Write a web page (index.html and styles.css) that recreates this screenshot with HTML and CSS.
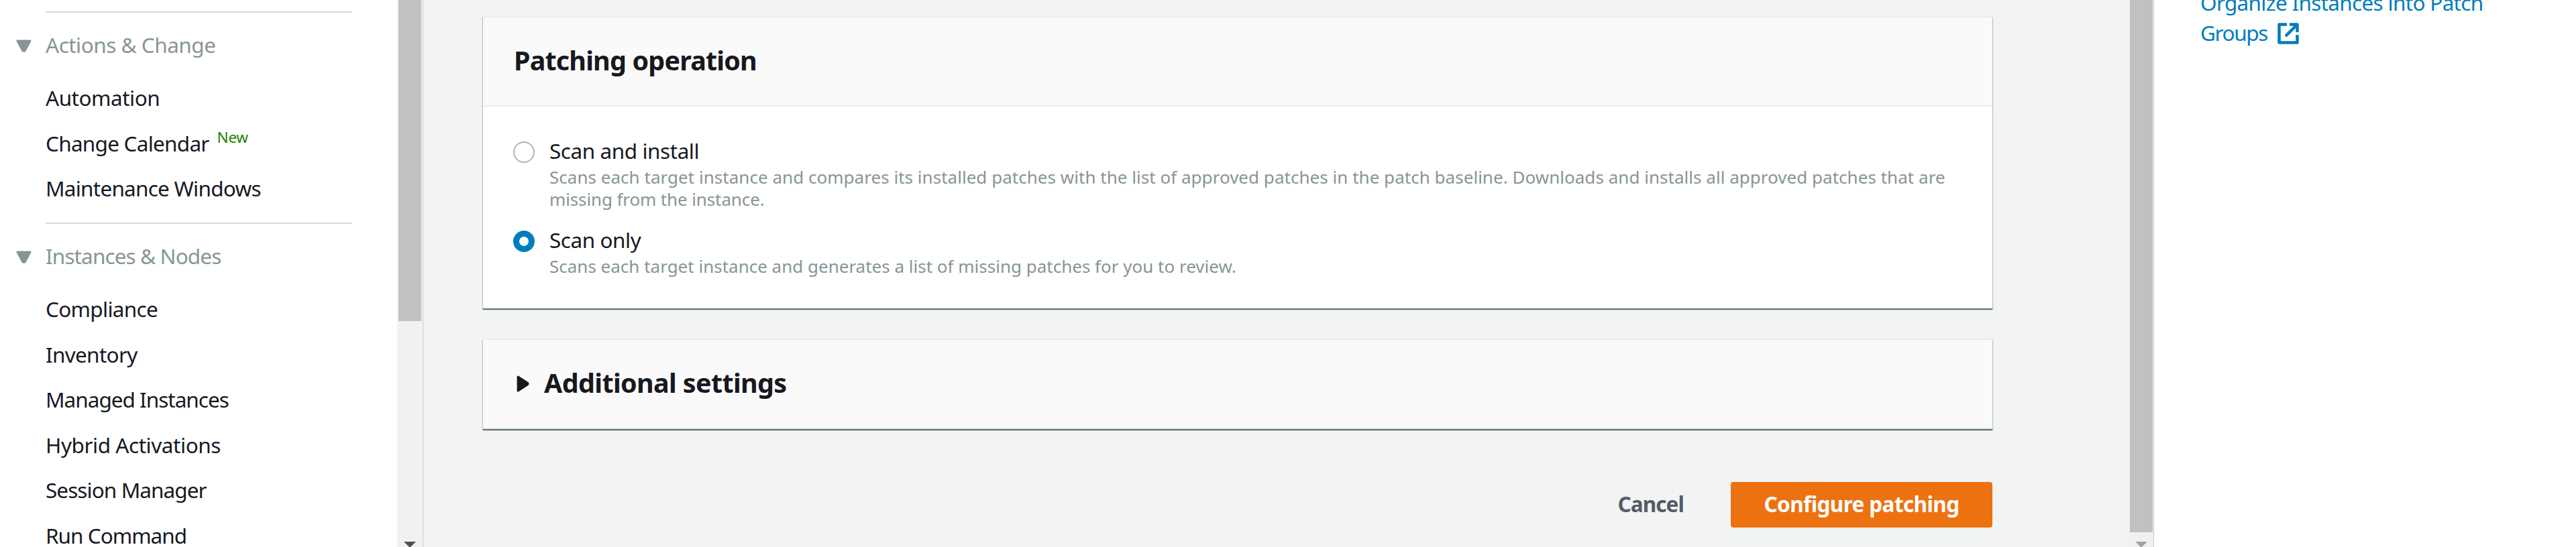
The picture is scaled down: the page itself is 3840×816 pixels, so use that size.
FILE: index.html
```html
<!DOCTYPE html>
<html lang="en">
<head>
<meta charset="utf-8">
<title>Configure patching</title>
<link rel="stylesheet" href="styles.css">
</head>
<body>
<div class="app">
  <nav class="sidebar">
    <div class="nav-scroll">
      <section class="group">
        <h3 class="group-title"><svg class="caret-down" viewBox="0 0 23 19"><path d="M2 2h19l-8 15h-3z"/></svg><span class="t-actions">Actions &amp; Change</span></h3>
        <ul class="nav-list">
          <li><a class="t-automation">Automation</a></li>
          <li><a class="t-calendar">Change Calendar</a><span class="new">New</span></li>
          <li><a class="t-maint">Maintenance Windows</a></li>
        </ul>
      </section>
      <section class="group">
        <h3 class="group-title"><svg class="caret-down" viewBox="0 0 23 19"><path d="M2 2h19l-8 15h-3z"/></svg><span class="t-nodes">Instances &amp; Nodes</span></h3>
        <ul class="nav-list">
          <li><a class="t-compliance">Compliance</a></li>
          <li><a class="t-inventory">Inventory</a></li>
          <li><a class="t-managed">Managed Instances</a></li>
          <li><a class="t-hybrid">Hybrid Activations</a></li>
          <li><a class="t-session">Session Manager</a></li>
          <li><a class="t-run">Run Command</a></li>
        </ul>
      </section>
    </div>
    <div class="scrollbar nav-bar"><div class="thumb"></div><svg class="arrow" viewBox="0 0 18 8"><path d="M0 0h18l-8 8h-2z"/></svg></div>
  </nav>
  <main class="main">
    <div class="content">
      <section class="card">
        <header class="card-head"><h2 class="t-op">Patching operation</h2></header>
        <div class="card-body">
          <label class="option">
            <span class="radio"></span>
            <span class="option-text">
              <span class="label t-install">Scan and install</span>
              <span class="desc"><span class="t-desc1">Scans each target instance and compares its installed patches with the list of approved patches in the patch baseline. Downloads and installs all approved patches that are</span><br><span class="t-desc2">missing from the instance.</span></span>
            </span>
          </label>
          <label class="option">
            <span class="radio checked"></span>
            <span class="option-text">
              <span class="label t-only">Scan only</span>
              <span class="desc"><span class="t-desc3">Scans each target instance and generates a list of missing patches for you to review.</span></span>
            </span>
          </label>
        </div>
      </section>
      <section class="card collapsed">
        <header class="card-head"><svg class="caret-right" viewBox="0 0 18 24"><path d="M2 2v20l14-9v-2z"/></svg><h2 class="t-add">Additional settings</h2></header>
      </section>
      <div class="actions">
        <a class="cancel t-cancel">Cancel</a>
        <a class="primary"><span class="t-configure">Configure patching</span></a>
      </div>
    </div>
    <div class="scrollbar main-bar"><div class="thumb"></div><svg class="arrow" viewBox="0 0 18 8"><path d="M0 0h18l-8 8h-2z"/></svg></div>
  </main>
  <aside class="help">
    <a class="help-link"><span class="t-organize">Organize Instances into Patch</span><br><span class="t-groups">Groups</span><svg class="external" viewBox="0 0 32 32"><path d="M14 2.500H2.500v27h27V18M18 2.500h11.500V14M28.500 3.500L12 20"/></svg></a>
  </aside>
</div>
</body>
</html>
```
FILE: styles.css
```css
* { box-sizing: border-box; }
body { margin: 0; font-family: "Noto Sans", "Open Sans", sans-serif; font-size: 31.5px; color: #16191f; background: #fff; }
h2, h3, ul { margin: 0; padding: 0; font-weight: 400; font-size: inherit; }
ul { list-style: none; }
.app { display: flex; width: 3840px; height: 816px; overflow: hidden; }
.app span, .app a, .app h2 { white-space: nowrap; }

.sidebar { display: flex; width: 631px; height: 816px; border-right: 1px solid #c6cbcc; flex: none; overflow: hidden; }
.nav-scroll { width: 592px; padding-top: 17px; flex: none; }
.group { margin-right: 67px; }
.group-title { display: flex; align-items: center; height: 95px; padding: 0 0 0 24px; color: #879596; position: relative; line-height: 64px; }
.group-title::before { content: ""; position: absolute; left: 68px; right: 0; top: 0; height: 2px; background: #d5dbdb; }
.group-title svg { margin-right: 21px; margin-top: 7px; }
.group-title span { margin-top: 4px; }
.caret-down { width: 23px; height: 19px; fill: #879596; stroke: #879596; stroke-width: 3; stroke-linejoin: round; flex: none; }
.nav-list { padding: 0 0 17.500px 68px; }
.nav-list li { height: 67.500px; line-height: 67.500px; display: flex; }
.new { color: #1d8102; font-size: 22.500px; line-height: 50px; margin-left: 12px; letter-spacing: -0.3px; }

.scrollbar { display: flex; flex-direction: column; justify-content: space-between; align-items: center; height: 816px; width: 38px; background: #f1f1f1; flex: none; }
.thumb { width: 34px; background: #c1c1c1; }
.nav-bar .thumb { height: 479px; }
.main-bar .thumb { height: 794px; }
.arrow { width: 18px; height: 8px; fill: #505050; }
.main-bar .arrow { fill: #a3a3a3; }

.main { display: flex; justify-content: space-between; width: 2580px; height: 816px; background: #f2f3f3; border-right: 1px solid #c6cbcc; flex: none; }
.main-bar { width: 37px; }
.content { width: 2250px; margin-left: 89px; padding-top: 24px; }
.card { background: #fff; border-top: 2px solid #eaeded; box-shadow: 0 2px 1px 0 rgba(0,28,36,.4), 1px 2px 1px 0 rgba(0,28,36,.18), -1px 2px 1px 0 rgba(0,28,36,.18); height: 436px; margin-bottom: 45px; }
.card-head { display: flex; align-items: center; height: 133px; padding: 0 46px; background: #fafafa; border-bottom: 2px solid #eaeded; }
.card h2 { font-size: 39.500px; font-weight: 700; line-height: 54px; margin-top: -3px; }
.card.collapsed { height: 135px; margin-bottom: 79px; }
.caret-right { width: 19px; height: 25px; fill: #16191f; stroke: #16191f; stroke-width: 3; stroke-linejoin: round; margin: 0 22px 0 4px; }
.card-body { padding: 45px 45px 0; }
.option { display: flex; height: 133px; }
.radio { width: 32px; height: 32px; margin: 7px 22px 0 0; border: 2px solid #aab7b8; border-radius: 50%; background: #fff; flex: none; }
.radio.checked { border: 9px solid #007dbc; }
.option-text { display: block; }
.label { display: block; line-height: 42px; }
.desc { display: block; font-size: 26px; line-height: 33px; color: #879596; padding-top: 2px; }

.actions { display: flex; justify-content: flex-end; align-items: center; height: 68px; font-weight: 700; line-height: 43px; padding-bottom: 0; }
.cancel { color: #545b64; margin: -3px 70px 0 0; }
.primary { display: flex; align-items: center; justify-content: center; width: 390px; height: 68px; padding-bottom: 3px; border-radius: 4px; background: #ec7211; color: #fff; }

.help { flex: 1; padding-left: 69px; background: #fff; }
.help-link { display: block; line-height: 45px; margin-top: -19px; color: #007dbc; }
.external { width: 32px; height: 32px; margin-left: 15px; vertical-align: -5px; fill: none; stroke: #007dbc; stroke-width: 4.500; stroke-linejoin: round; }

/* Tracking per text */
.t-actions { letter-spacing: -0.5px; }
.t-automation { letter-spacing: -0.5px; }
.t-calendar { letter-spacing: -0.75px; }
.t-maint { letter-spacing: -0.76px; }
.t-nodes { letter-spacing: -0.88px; }
.t-compliance { letter-spacing: -0.7px; }
.t-inventory { letter-spacing: -0.7px; }
.t-managed { letter-spacing: -1px; }
.t-hybrid { letter-spacing: -0.45px; }
.t-session { letter-spacing: -0.93px; }
.t-run { letter-spacing: -1px; }
.t-op { letter-spacing: -0.85px; }
.t-add { letter-spacing: -0.66px; }
.t-install, .t-only { letter-spacing: -0.45px; }
.t-desc1 { letter-spacing: 0.03px; }
.t-desc2 { letter-spacing: -0.12px; }
.t-cancel { letter-spacing: -0.9px; }
.t-configure { letter-spacing: -0.6px; }
.t-organize { letter-spacing: -0.69px; }
.t-groups { letter-spacing: -1.4px; }
```
